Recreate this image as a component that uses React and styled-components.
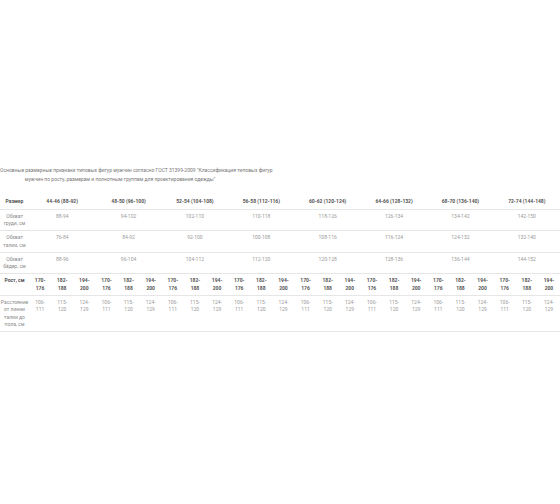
import styled, { createGlobalStyle } from "styled-components";

const GlobalStyle = createGlobalStyle`
  html, body {
    margin: 0;
    padding: 0;
    background: #fff;
  }
  body {
    font-family: Roboto, "Liberation Sans", sans-serif;
  }
`;

const Page = styled.div`
  width: 560px;
  padding-top: 166px;
`;

const Caption = styled.p`
  width: 240px;
  margin: 0 0 10px 0;
  font-size: 5px;
  line-height: 9px;
  color: #777;
  text-align: center;
  white-space: nowrap;
`;

const Table = styled.table`
  width: 560px;
  border-collapse: collapse;
  table-layout: fixed;
  font-size: 5px;
  line-height: 7.5px;
`;

const HeadCell = styled.th`
  padding: 3.5px 0;
  font-weight: 700;
  color: #555;
  text-align: center;
  white-space: nowrap;
  border-bottom: 1px solid #e6e6e6;
`;

const Label = styled.td`
  padding: 3px 0 2.5px;
  color: ${(p) => (p.$strong ? "#555" : "#8a8a8a")};
  font-weight: ${(p) => (p.$strong ? 700 : 400)};
  text-align: center;
  white-space: nowrap;
  vertical-align: top;
  border-bottom: 1px solid #e6e6e6;
`;

const Cell = styled.td`
  padding: 3px 0 2.5px;
  color: ${(p) => (p.$strong ? "#555" : "#9a9a9a")};
  font-weight: ${(p) => (p.$strong ? 700 : 400)};
  text-align: center;
  vertical-align: top;
  border-bottom: 1px solid #e6e6e6;
`;

const sizes = [
  "44-46 (88-92)",
  "48-50 (96-100)",
  "52-54 (104-108)",
  "56-58 (112-116)",
  "60-62 (120-124)",
  "64-66 (128-132)",
  "68-70 (136-140)",
  "72-74 (144-148)",
];

const rows = [
  { label: ["Обхват", "груди, см"], values: ["88-94", "94-102", "102-110", "110-118", "118-126", "126-134", "134-142", "142-150"] },
  { label: ["Обхват", "талии, см"], values: ["76-84", "84-92", "92-100", "100-108", "108-116", "116-124", "124-132", "132-140"] },
  { label: ["Обхват", "бёдер, см"], values: ["88-96", "96-104", "104-112", "112-120", "120-128", "128-136", "136-144", "144-152"] },
];

const heights = ["170-176", "182-188", "194-200"];
const distances = ["106-111", "115-120", "124-129"];

function Split({ text }) {
  const [a, b] = text.split("-");
  return (
    <>
      {a}-<br />
      {b}
    </>
  );
}

function Lines({ lines }) {
  return lines.map((l, i) => (
    <span key={i}>
      {i > 0 && <br />}
      {l}
    </span>
  ));
}

export default function App() {
  const repeat = (list) => sizes.flatMap(() => list);
  return (
    <>
      <GlobalStyle />
      <Page>
        <Caption>
          Основные размерные признаки типовых фигур мужчин согласно ГОСТ 31399-2009 "Классификация типовых фигур
          <br />
          мужчин по росту, размерам и полнотным группам для проектирования одежды"
        </Caption>
        <Table>
          <colgroup>
            <col style={{ width: 29 }} />
            {repeat(heights).map((_, i) => (
              <col key={i} />
            ))}
          </colgroup>
          <thead>
            <tr>
              <HeadCell>Размер</HeadCell>
              {sizes.map((s) => (
                <HeadCell key={s} colSpan={3}>
                  {s}
                </HeadCell>
              ))}
            </tr>
          </thead>
          <tbody>
            {rows.map((r) => (
              <tr key={r.label[1]}>
                <Label>
                  <Lines lines={r.label} />
                </Label>
                {r.values.map((v) => (
                  <Cell key={v} colSpan={3}>
                    {v}
                  </Cell>
                ))}
              </tr>
            ))}
            <tr>
              <Label $strong>Рост, см</Label>
              {repeat(heights).map((h, i) => (
                <Cell key={i} $strong>
                  <Split text={h} />
                </Cell>
              ))}
            </tr>
            <tr>
              <Label>
                <Lines lines={["Расстояние", "от линии", "талии до", "пола, см"]} />
              </Label>
              {repeat(distances).map((d, i) => (
                <Cell key={i}>
                  <Split text={d} />
                </Cell>
              ))}
            </tr>
          </tbody>
        </Table>
      </Page>
    </>
  );
}
